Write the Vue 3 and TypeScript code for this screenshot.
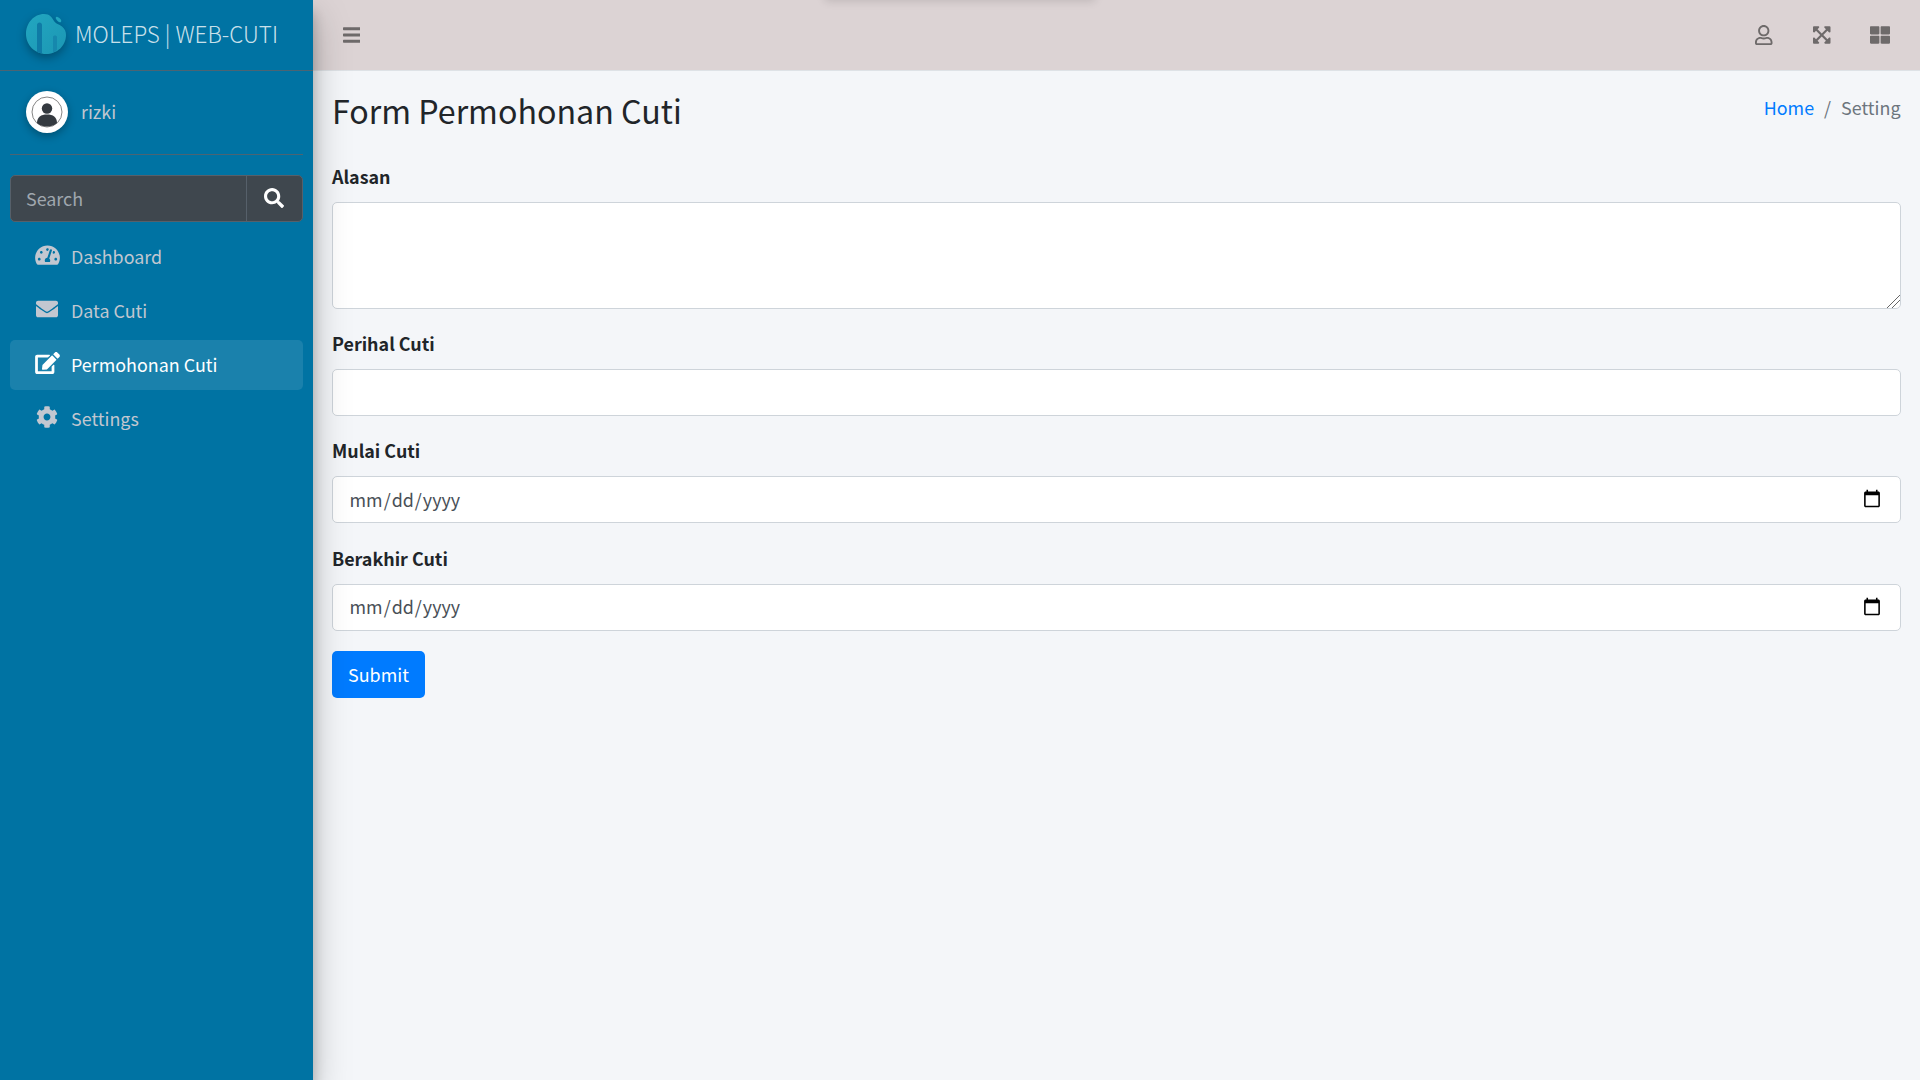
<script setup lang="ts">
const items = [
  { label: 'Dashboard', icon: 'gauge', active: false },
  { label: 'Data Cuti', icon: 'mail', active: false },
  { label: 'Permohonan Cuti', icon: 'edit', active: true },
  { label: 'Settings', icon: 'gear', active: false },
]
</script>

<template>
  <div class="page">
    <aside class="sidebar">
      <div class="brand">
        <svg class="logo" viewBox="0 0 40 40">
          <defs>
            <linearGradient id="lg" x1="0" y1="0" x2="1" y2="1">
              <stop offset="0" stop-color="#22a6c0" />
              <stop offset="1" stop-color="#1c97b4" />
            </linearGradient>
          </defs>
          <path d="M0 20C0 9 8 0 18 0c6 0 8 3.5 10 7 2 3 5 3 8 5.5 3 2.5 4 5.5 4 8.5 0 11-9 19-20 19S0 31 0 20z" fill="url(#lg)" />
          <path d="M11 11c0-3.5 5-3.5 5 0v28.5c-2-.3-3.5-.9-5-1.800z" fill="#0f7ba6" />
          <path d="M27 23c0-2 4-2 4 0v13c-1.300 1-2.600 1.900-4 2.500z" fill="#1688ad" />
          <ellipse cx="32.5" cy="5.5" rx="3.4" ry="1.6" transform="rotate(45 32.5 5.5)" fill="#23a5bf" />
        </svg>
        <span class="brand-text">MOLEPS | WEB-CUTI</span>
      </div>
      <div class="inner">
        <div class="user">
          <div class="avatar">
            <svg viewBox="0 0 34 34">
              <circle cx="17" cy="17" r="15" fill="#fff" stroke="#666" stroke-width=".8" />
              <circle cx="17" cy="13.5" r="5.2" fill="#343a40" />
              <path d="M7 28c0-6 4-8.5 10-8.5s10 2.5 10 8.5c-3 2.6-6.5 3.5-10 3.5s-7-.9-10-3.5z" fill="#343a40" />
            </svg>
          </div>
          <span class="user-name">rizki</span>
        </div>
        <div class="search">
          <input class="search-input" placeholder="Search" />
          <button class="search-btn" type="button" aria-label="Search">
            <svg viewBox="0 0 512 512"><path fill="#fff" d="M505 442.7L405.3 343c-4.5-4.5-10.6-7-17-7H372c27.6-35.3 44-79.7 44-128C416 93.1 322.9 0 208 0S0 93.1 0 208s93.1 208 208 208c48.3 0 92.7-16.4 128-44v16.3c0 6.4 2.5 12.5 7 17l99.7 99.7c9.4 9.4 24.6 9.4 33.9 0l28.3-28.3c9.4-9.4 9.4-24.6.1-34zM208 336c-70.7 0-128-57.2-128-128 0-70.7 57.2-128 128-128 70.7 0 128 57.2 128 128 0 70.7-57.2 128-128 128z" /></svg>
          </button>
        </div>
        <nav class="nav">
          <a v-for="item in items" :key="item.label" class="nav-link" :class="{ active: item.active }">
            <span class="nav-icon">
              <svg v-if="item.icon === 'gauge'" viewBox="0 0 576 512" width="25" height="22"><path fill="currentColor" d="M288 32C128.9 32 0 160.9 0 320c0 52.8 14.3 102.3 39.1 144.8 5.6 9.6 16.3 15.2 27.4 15.2h443c11.1 0 21.8-5.6 27.4-15.2C561.8 422.3 576 372.8 576 320c0-159.1-128.9-288-288-288zm0 64c14.7 0 26.6 10.1 30.3 23.7-1.1 2.3-2.6 4.2-3.5 6.7l-9.2 27.7c-5.1 3.5-11 6-17.6 6-17.7 0-32-14.3-32-32S270.3 96 288 96zM96 384c-17.7 0-32-14.3-32-32s14.3-32 32-32 32 14.3 32 32-14.3 32-32 32zm48-160c-17.7 0-32-14.3-32-32s14.3-32 32-32 32 14.3 32 32-14.3 32-32 32zm246.8-72.4l-61.3 184C343.1 347.3 352 364.5 352 384c0 11.7-3.4 22.6-8.9 32H232.9c-5.5-9.4-8.9-20.3-8.9-32 0-33.9 26.5-61.4 59.9-63.6l61.3-184c4.2-12.6 17.7-19.5 30.4-15.2 12.6 4.2 19.4 17.8 15.2 30.4zm14.7 57.2l15.5-46.6c3.5-1.3 7.1-2.2 11-2.2 17.7 0 32 14.3 32 32s-14.3 32-32 32c-11.4 0-20.9-6.3-26.5-15.2zM480 384c-17.7 0-32-14.3-32-32s14.3-32 32-32 32 14.3 32 32-14.3 32-32 32z" /></svg>
              <svg v-else-if="item.icon === 'mail'" viewBox="0 0 512 512" width="22" height="22"><path fill="currentColor" d="M502.3 190.8c3.9-3.1 9.7-.2 9.7 4.7V400c0 26.5-21.5 48-48 48H48c-26.5 0-48-21.5-48-48V195.6c0-5 5.7-7.8 9.7-4.7 22.4 17.4 52.1 39.5 154.1 113.6 21.1 15.4 56.7 47.8 92.2 47.6 35.7.3 72-32.8 92.3-47.6 102-74.1 131.6-96.3 154-113.7zM256 320c23.2.4 56.6-29.2 73.4-41.4 132.7-96.3 142.8-104.7 173.4-128.7 5.8-4.5 9.2-11.5 9.2-18.9v-19c0-26.5-21.5-48-48-48H48C21.5 64 0 85.5 0 112v19c0 7.4 3.4 14.3 9.2 18.9 30.6 23.9 40.7 32.4 173.4 128.7 16.8 12.2 50.2 41.8 73.4 41.4z" /></svg>
              <svg v-else-if="item.icon === 'edit'" viewBox="0 0 576 512" width="25" height="22"><path fill="currentColor" d="M402.6 83.2l90.2 90.2c3.8 3.8 3.8 10 0 13.8L274.4 405.6l-92.8 10.3c-12.4 1.4-22.9-9.1-21.5-21.5l10.3-92.8L388.8 83.2c3.8-3.8 10-3.8 13.8 0zm162-22.9l-48.8-48.8c-15.2-15.2-39.9-15.2-55.2 0l-35.4 35.4c-3.8 3.8-3.8 10 0 13.8l90.2 90.2c3.8 3.8 10 3.8 13.8 0l35.4-35.4c15.2-15.3 15.2-40 0-55.2zM384 346.2V448H64V128h229.8c3.2 0 6.2-1.3 8.5-3.5l40-40c7.6-7.6 2.2-20.5-8.5-20.5H48C21.5 64 0 85.5 0 112v352c0 26.5 21.5 48 48 48h352c26.5 0 48-21.5 48-48V306.2c0-10.7-12.9-16-20.5-8.5l-40 40c-2.2 2.3-3.5 5.3-3.5 8.5z" /></svg>
              <svg v-else viewBox="0 0 512 512" width="22" height="22"><path fill="currentColor" d="M487.4 315.7l-42.6-24.6c4.3-23.2 4.3-47 0-70.2l42.6-24.6c4.9-2.8 7.1-8.6 5.5-14-11.1-35.6-30-67.8-54.7-94.6-3.8-4.1-10-5.1-14.8-2.3L380.8 110c-17.9-15.4-38.5-27.3-60.8-35.1V25.8c0-5.6-3.9-10.5-9.4-11.7-36.7-8.2-74.3-7.8-109.2 0-5.5 1.2-9.4 6.1-9.4 11.7V75c-22.2 7.9-42.8 19.8-60.8 35.1L88.7 85.5c-4.9-2.8-11-1.9-14.8 2.3-24.7 26.7-43.6 58.9-54.7 94.6-1.7 5.4.6 11.2 5.5 14L67.3 221c-4.3 23.2-4.3 47 0 70.2l-42.6 24.6c-4.9 2.8-7.1 8.6-5.5 14 11.1 35.6 30 67.8 54.7 94.6 3.8 4.1 10 5.1 14.8 2.3l42.6-24.6c17.9 15.4 38.5 27.3 60.8 35.1v49.2c0 5.6 3.9 10.5 9.4 11.7 36.7 8.2 74.3 7.8 109.2 0 5.5-1.2 9.4-6.1 9.4-11.7v-49.2c22.2-7.9 42.8-19.8 60.8-35.1l42.6 24.6c4.9 2.8 11 1.9 14.8-2.3 24.7-26.7 43.6-58.9 54.7-94.6 1.5-5.5-.7-11.3-5.6-14.1zM256 336c-44.1 0-80-35.9-80-80s35.9-80 80-80 80 35.9 80 80-35.9 80-80 80z" /></svg>
            </span>
            <span class="nav-text">{{ item.label }}</span>
          </a>
        </nav>
      </div>
    </aside>

    <div class="main">
      <header class="topbar">
        <div class="peek"></div>
        <button class="tool" type="button" aria-label="Menu">
          <svg viewBox="0 0 448 512" width="17.5" height="20"><path fill="currentColor" d="M16 132h416c8.8 0 16-7.2 16-16V76c0-8.8-7.2-16-16-16H16C7.2 60 0 67.2 0 76v40c0 8.8 7.2 16 16 16zm0 160h416c8.8 0 16-7.2 16-16v-40c0-8.8-7.2-16-16-16H16c-8.8 0-16 7.2-16 16v40c0 8.8 7.2 16 16 16zm0 160h416c8.8 0 16-7.2 16-16v-40c0-8.8-7.2-16-16-16H16c-8.8 0-16 7.2-16 16v40c0 8.8 7.2 16 16 16z" /></svg>
        </button>
        <div class="tools">
          <button class="tool" type="button" aria-label="User">
            <svg viewBox="0 0 448 512" width="17.5" height="20"><path fill="currentColor" d="M313.6 304c-28.7 0-42.5 16-89.6 16-47.1 0-60.8-16-89.6-16C60.2 304 0 364.2 0 438.4V464c0 26.5 21.5 48 48 48h352c26.5 0 48-21.5 48-48v-25.6c0-74.2-60.2-134.4-134.4-134.4zM400 464H48v-25.6c0-47.6 38.8-86.4 86.4-86.4 14.6 0 38.3 16 89.6 16 51.7 0 74.9-16 89.6-16 47.6 0 86.4 38.8 86.4 86.4V464zM224 288c79.5 0 144-64.5 144-144S303.5 0 224 0 80 64.5 80 144s64.5 144 144 144zm0-240c52.9 0 96 43.1 96 96s-43.1 96-96 96-96-43.1-96-96 43.1-96 96-96z" /></svg>
          </button>
          <button class="tool" type="button" aria-label="Fullscreen">
            <svg viewBox="0 0 448 512" width="17.5" height="20"><path fill="currentColor" d="M448 344v112a23.9 23.9 0 0 1-24 24H312c-21.4 0-32.1-25.9-17-41l36.2-36.2L224 295.6 116.8 402.9 153 439c15.1 15.1 4.4 41-17 41H24a23.9 23.9 0 0 1-24-24V344c0-21.4 25.9-32.1 41-17l36.2 36.2L184.5 256 77.2 148.7 41 185c-15.1 15.1-41 4.4-41-17V56a23.9 23.9 0 0 1 24-24h112c21.4 0 32.1 25.9 17 41l-36.2 36.2L224 216.4l107.2-107.3L295 73c-15.1-15.1-4.4-41 17-41h112a23.9 23.9 0 0 1 24 24v112c0 21.4-25.9 32.1-41 17l-36.2-36.2L263.5 256l107.3 107.2L407 327.1c15.1-15.2 41-4.5 41 16.9z" /></svg>
          </button>
          <button class="tool" type="button" aria-label="Apps">
            <svg viewBox="0 0 512 512" width="20" height="20"><path fill="currentColor" d="M296 32h192c13.3 0 24 10.7 24 24v160c0 13.3-10.7 24-24 24H296c-13.3 0-24-10.7-24-24V56c0-13.3 10.7-24 24-24zm-80 0H24C10.7 32 0 42.7 0 56v160c0 13.3 10.7 24 24 24h192c13.3 0 24-10.7 24-24V56c0-13.3-10.7-24-24-24zM0 296v160c0 13.3 10.7 24 24 24h192c13.3 0 24-10.7 24-24V296c0-13.3-10.7-24-24-24H24c-13.3 0-24 10.7-24 24zm296 184h192c13.3 0 24-10.7 24-24V296c0-13.3-10.7-24-24-24H296c-13.3 0-24 10.7-24 24v160c0 13.3 10.7 24 24 24z" /></svg>
          </button>
        </div>
      </header>

      <div class="content">
        <div class="title-row">
          <h1 class="title">Form Permohonan Cuti</h1>
          <ol class="crumbs">
            <li><a class="crumb-link">Home</a></li>
            <li class="sep">/</li>
            <li>Setting</li>
          </ol>
        </div>
        <form class="form" @submit.prevent>
          <div class="group">
            <label class="label" for="alasan">Alasan</label>
            <textarea id="alasan" class="control area"></textarea>
          </div>
          <div class="group">
            <label class="label" for="perihal">Perihal Cuti</label>
            <input id="perihal" class="control" type="text" />
          </div>
          <div class="group">
            <label class="label" for="mulai">Mulai Cuti</label>
            <input id="mulai" class="control" type="date" />
          </div>
          <div class="group">
            <label class="label" for="akhir">Berakhir Cuti</label>
            <input id="akhir" class="control" type="date" />
          </div>
          <button class="submit" type="submit">Submit</button>
        </form>
      </div>
    </div>
  </div>
</template>

<style>
html, body { margin: 0; background: #f4f6f9; overflow: hidden; }
</style>

<style scoped>
.page {
  display: flex;
  width: 1920px;
  height: 1080px;
  overflow: hidden;
  font-family: "Noto Sans CJK SC", "Noto Sans", sans-serif;
  font-size: 17.9px;
  line-height: 30px;
  color: #212529;
  background: #f4f6f9;
}
.sidebar {
  position: relative;
  z-index: 2;
  flex: 0 0 312.5px;
  min-width: 0;
  background: #0073a3;
  box-shadow: 0 17px 35px rgba(0, 0, 0, .25), 0 12px 12px rgba(0, 0, 0, .22);
}
.brand {
  display: flex;
  align-items: center;
  height: 71px;
  box-sizing: border-box;
  padding-left: 26px;
  border-bottom: 1px solid #4b6473;
}
.logo {
  flex: none;
  width: 40px;
  height: 40px;
  margin-top: -3px;
  filter: drop-shadow(0 4px 5px rgba(0, 0, 0, .3));
}
.brand-text {
  margin-left: 9px;
  margin-top: -5px;
  font-size: 22.4px;
  font-weight: 300;
  color: rgba(255, 255, 255, .8);
  white-space: nowrap;
}
.inner { padding: 0 10px; }
.user {
  display: flex;
  align-items: center;
  height: 84px;
  box-sizing: border-box;
  padding-left: 16px;
  border-bottom: 1px solid #4b6473;
}
.avatar {
  flex: none;
  width: 42px;
  height: 42px;
  margin-top: -1px;
  box-sizing: border-box;
  padding: 4px;
  border-radius: 50%;
  background: #fff;
  box-shadow: 0 3px 8px rgba(0, 0, 0, .3);
}
.avatar svg { display: block; width: 100%; height: 100%; }
.user-name { margin-left: 13px; margin-top: -4px; color: #c2c7d0; }
.search {
  display: flex;
  height: 46.5px;
  margin-top: 20px;
  box-sizing: border-box;
  background: #3f474e;
  border: 1px solid #56606a;
  border-radius: 5px;
}
.search-input {
  flex: 1;
  min-width: 0;
  padding: 0 15px;
  border: 0;
  outline: 0;
  background: transparent;
  font: inherit;
  color: #fff;
}
.search-input::placeholder { color: #a0a7ae; opacity: 1; }
.search-btn {
  flex: none;
  display: flex;
  align-items: center;
  justify-content: center;
  width: 56px;
  padding: 0;
  border: 0;
  border-left: 1px solid #56606a;
  background: transparent;
}
.search-btn svg { width: 20px; height: 20px; }
.nav { display: flex; flex-direction: column; gap: 4px; margin-top: 10px; }
.nav-link {
  display: flex;
  align-items: center;
  height: 50px;
  padding-left: 61px;
  position: relative;
  border-radius: 5px;
  color: #c2c7d0;
}
.nav-link.active { background: rgba(255, 255, 255, .1); color: #fff; }
.nav-text { margin-top: -2px; }
.nav-icon {
  position: absolute;
  left: 22px;
  top: 12px;
  width: 30px;
  height: 22px;
  display: flex;
  justify-content: center;
}
.main { flex: 1; min-width: 0; display: flex; flex-direction: column; }
.topbar {
  position: relative;
  display: flex;
  align-items: center;
  justify-content: space-between;
  height: 71px;
  box-sizing: border-box;
  padding: 0 11px 0 10px;
  background: #dcd3d4;
  border-bottom: 1px solid #dee2e6;
}
.peek {
  position: absolute;
  left: 512px;
  top: -30px;
  width: 270px;
  height: 30px;
  box-shadow: 0 1px 10px rgba(0, 0, 0, .14);
}
.tools { display: flex; }
.tool {
  display: flex;
  align-items: center;
  justify-content: center;
  width: 58px;
  height: 50px;
  padding: 0;
  border: 0;
  background: transparent;
  color: #6e6a6a;
}
.content { padding: 0 19.5px; }
.title-row {
  display: flex;
  justify-content: space-between;
  height: 91px;
}
.title {
  margin: 18px 0 0;
  font-size: 32.2px;
  line-height: 43px;
  font-weight: 400;
}
.crumbs {
  display: flex;
  gap: 10px;
  list-style: none;
  margin: 21px 0 0;
  padding: 0;
  color: #6c757d;
}
.crumb-link { color: #007bff; }
.form { display: flex; flex-direction: column; }
.group { display: flex; flex-direction: column; margin-bottom: 20.4px; }
.label { font-weight: 700; line-height: 28px; margin-bottom: 12px; }
.control {
  display: block;
  box-sizing: border-box;
  width: 100%;
  height: 47px;
  padding: 0 15.5px 2px;
  background: #fff;
  border: 1px solid #ced4da;
  border-radius: 5px;
  font: inherit;
  color: #495057;
  outline: 0;
}
.control::-webkit-calendar-picker-indicator { width: 20px; height: 20px; margin-right: 0.5px; position: relative; top: 0.5px; }
.area { height: 106.6px; padding: 8px 17px; }
.area::-webkit-resizer {
  background: linear-gradient(135deg, transparent 55%, #666 55%, #666 60%, transparent 60%, transparent 71%, #666 71%, #666 76%, transparent 76%);
}
.submit {
  align-self: flex-start;
  width: 93px;
  height: 47px;
  padding: 0 0 2px;
  border: 0;
  border-radius: 5px;
  background: #007bff;
  color: #fff;
  font: inherit;
}
</style>
